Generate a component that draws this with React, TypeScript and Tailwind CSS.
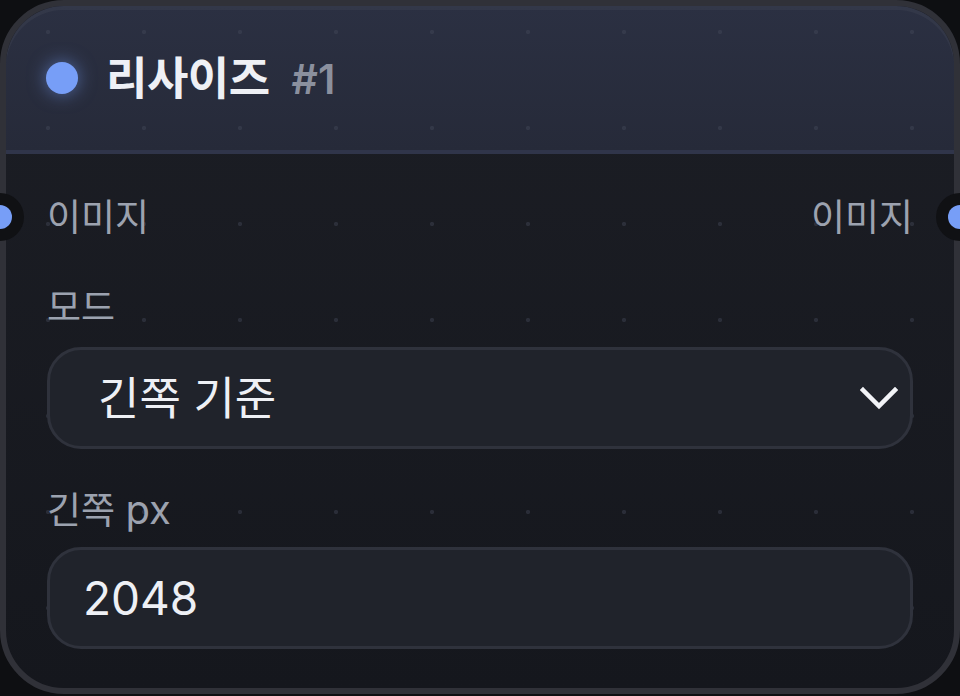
import React from "react";

const dots =
  "bg-[radial-gradient(circle_at_48px_48px,rgba(70,75,92,0.4)_1.8px,transparent_2.4px)] bg-[length:96px_96px] bg-[position:-6px_-22px]";

export default function App() {
  return (
    <div
      className="w-[960px] h-[696px] bg-[#0e0f12] overflow-hidden"
      style={{ fontFamily: '"Inter", "Noto Sans CJK KR", "Noto Sans", sans-serif' }}
    >
      <div className="relative w-[960px] h-[694px] rounded-[64px] border-[6px] border-[#303138] bg-gradient-to-b from-[#1c1e25] to-[#15171d] overflow-visible">
        <div className={`absolute inset-0 rounded-[58px] ${dots}`} />
        <div className="relative flex flex-col h-full">
          {/* header */}
          <div className="h-[148px] rounded-t-[58px] bg-gradient-to-b from-[#2b3042] to-[#262a39] border-b-[4px] border-[#30354a] shadow-[inset_0_4px_0_rgba(255,255,255,0.04)] relative">
            <div className={`absolute inset-0 rounded-t-[58px] ${dots}`} />
            <div className="relative flex items-center h-[144px] pl-[40px]">
              <div className="w-[32px] h-[32px] rounded-full bg-[#779ef7] shadow-[0_0_18px_rgba(119,158,247,0.55)]" />
              <span className="ml-[28px] text-[45px] leading-none font-bold text-[#eef0f5] tracking-[-0.5px]">
                리사이즈
              </span>
              <span className="ml-[22px] text-[41px] leading-none font-semibold text-[#8b909e] mt-[2px]">
                #1
              </span>
            </div>
          </div>

          {/* body */}
          <div className="flex flex-col px-[41px] pt-[40px]">
            <div className="flex justify-between h-[48px] items-center text-[37px] leading-[48px] text-[#9ca2af]">
              <span>이미지</span>
              <span>이미지</span>
            </div>
            <div className="mt-[42px] h-[48px] text-[37px] leading-[48px] text-[#9ca2af]">모드</div>
            <div className="mt-[15px] h-[102px] rounded-[34px] border-[3px] border-[#2f323c] bg-[#20232b] flex items-center justify-between pl-[48px] pr-[12px]">
              <span className="text-[45px] leading-none text-[#eef0f5]">긴쪽 기준</span>
              <svg width="38" height="24" viewBox="0 0 38 24" fill="none">
                <polyline
                  points="3,4 19,20 35,4"
                  stroke="#f2f3f7"
                  strokeWidth="4.5"
                  strokeLinecap="square"
                  strokeLinejoin="miter"
                />
              </svg>
            </div>
            <div className="mt-[37px] h-[48px] text-[37px] leading-[48px] text-[#9ca2af]">
              긴쪽 <span className="text-[40px]">px</span>
            </div>
            <div className="mt-[13px] h-[102px] rounded-[34px] border-[3px] border-[#2f323c] bg-[#20232b] flex items-center pl-[33px]">
              <span className="text-[46px] leading-none text-[#eef0f5]">2048</span>
            </div>
          </div>
        </div>

        {/* handles */}
        <div className="absolute left-[-30px] top-[187px] w-[48px] h-[48px] rounded-full bg-[#101114] flex items-center justify-center">
          <div className="w-[24px] h-[24px] rounded-full bg-[#779ef7]" />
        </div>
        <div className="absolute right-[-30px] top-[187px] w-[48px] h-[48px] rounded-full bg-[#101114] flex items-center justify-center">
          <div className="w-[24px] h-[24px] rounded-full bg-[#779ef7]" />
        </div>
      </div>
    </div>
  );
}
